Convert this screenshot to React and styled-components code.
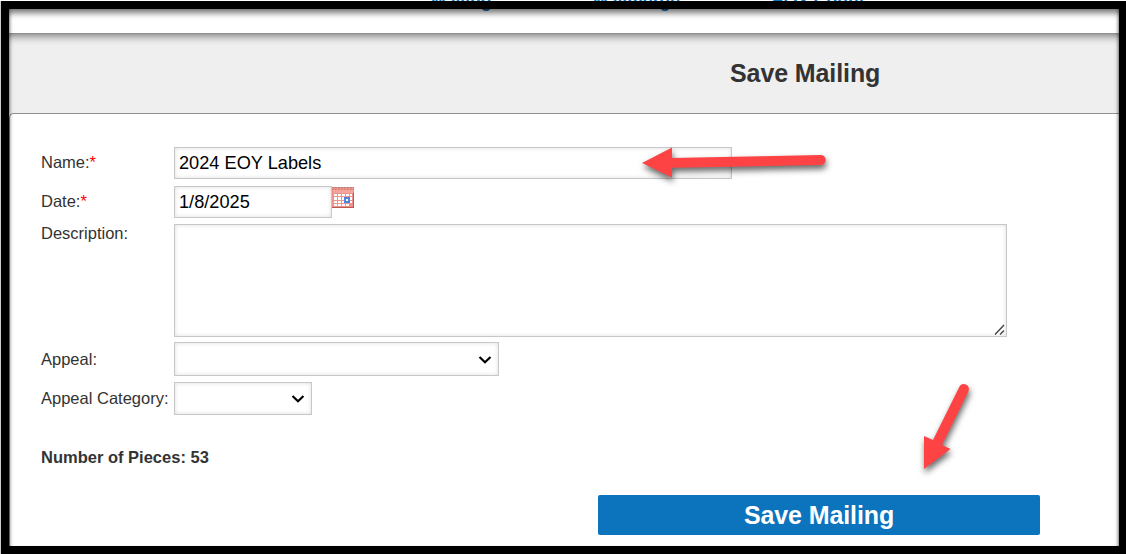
import { createGlobalStyle, styled } from "styled-components";

export default function App() {
    return (
        <Screen>
            <GlobalStyle />
            <Nav>
                <NavItem $width={162}>Mailing</NavItem>
                <NavItem $width={179}>Mailmerge</NavItem>
                <NavItem $width={120}>EOY Count</NavItem>
            </Nav>
            <Header>
                <Title>Save Mailing</Title>
            </Header>
            <Panel>
                <Row $height={32} $gap={7}>
                    <Label $lift={2}>Name:<Required>*</Required></Label>
                    <Input $width={558} defaultValue="2024 EOY Labels" />
                </Row>
                <Row $height={32} $gap={6}>
                    <Label $lift={2}>Date:<Required>*</Required></Label>
                    <Input $width={158} defaultValue="1/8/2025" />
                    <CalendarIcon />
                </Row>
                <Row $height={113} $gap={5} $top>
                    <Label>Description:</Label>
                    <TextArea>
                        <Grip viewBox="0 0 11 11">
                            <path d="M1 10.5 L10 1 M6 10.5 L10 6.5" />
                        </Grip>
                    </TextArea>
                </Row>
                <Row $height={34} $gap={6}>
                    <Label>Appeal:</Label>
                    <Select $width={325}><Chevron /></Select>
                </Row>
                <Row $height={33} $gap={32}>
                    <Label $lift={2}>Appeal Category:</Label>
                    <Select $width={138}><Chevron /></Select>
                </Row>
                <Pieces>Number of Pieces: 53</Pieces>
                <SaveButton>Save Mailing</SaveButton>
            </Panel>
            <Frame />
            <Arrows />
        </Screen>
    );
}

const CalendarIcon = () => (
    <Calendar viewBox="0 0 22 21" shapeRendering="crispEdges">
        <rect width="22" height="21" fill="#ec9088" />
        <path d="M0 .5H22" stroke="#a98480" strokeDasharray="2 1" />
        <path d="M0 2H22" stroke="#d4776e" strokeDasharray="1 2" />
        <rect x="1" y="3" width="20" height="3" fill="#f2a59c" />
        <rect x="1" y="6" width="19" height="13" fill="#f0958d" />
        <path
            d="M2 7h3v2h-3zM6 7h3v2h-3zM10 7h3v2h-3zM14 7h3v2h-3zM18 7h2v2h-2zM2 10h3v3h-3zM6 10h3v3h-3zM10 10h3v3h-3zM18 10h2v3h-2zM2 14h3v2h-3zM6 14h3v2h-3zM10 14h3v2h-3zM18 14h2v2h-2zM2 17h3v2h-3zM6 17h3v2h-3zM10 17h3v2h-3zM14 17h3v2h-3z"
            fill="#fff"
        />
        <rect x="12" y="10" width="6" height="6" fill="#4c86e4" />
        <rect x="14" y="12" width="2" height="2" fill="#fff" />
        <path d="M0 20.5H22M21.5 21V6" fill="none" stroke="#bd5851" />
    </Calendar>
);

const Chevron = () => (
    <ChevronIcon viewBox="0 0 14 10">
        <path d="M1.5 2 L7 7.2 L12.5 2" />
    </ChevronIcon>
);

const Arrows = () => (
    <Overlay viewBox="0 0 1126 554">
        <path d="M642 163 L672 147.5 V158 L820.5 155 A5 5 0 0 1 821 165 L672 167.8 V177.5 Z" />
        <path d="M924 469 V436 L933 440 L959.3 387 A5 5 0 0 1 968.5 391 L942 445 L950.5 449 Z" />
    </Overlay>
);

const GlobalStyle = createGlobalStyle`
    * {
        box-sizing: border-box;
    }
    body {
        margin: 0;
        font-family: "Liberation Sans", Arial, sans-serif;
        color: #333;
    }
`;

const Screen = styled.div`
    position: relative;
    width: 1126px;
    height: 554px;
    overflow: hidden;
    background: white;
`;

const Nav = styled.div`
    height: 33px;
    padding-left: 431px;
    display: flex;
`;

const NavItem = styled.span`
    width: ${(props) => props.$width}px;
    margin-top: -9px;
    font-size: 17.6px;
    font-weight: bold;
    line-height: 20px;
    color: #0b73bb;
    white-space: nowrap;
`;

const Header = styled.div`
    height: 80px;
    padding: 25px 0 0 730px;
    background: #efefef;
    box-shadow: inset 0 1px #909090, inset 0 9px 8px -6px #777;
`;

const Title = styled.h1`
    margin: 0;
    font-size: 25px;
    line-height: 30px;
    letter-spacing: -0.1px;
`;

const Panel = styled.div`
    height: 441px;
    margin-left: 9px;
    padding: 33px 0 0 31px;
    background: white;
    border: solid #909090;
    border-width: 1px 0 0 1px;
    border-top-left-radius: 5px;
    box-shadow: -5px -5px 0 #efefef;
`;

const Row = styled.div`
    display: flex;
    align-items: ${(props) => (props.$top ? "flex-start" : "center")};
    height: ${(props) => props.$height}px;
    margin-bottom: ${(props) => props.$gap}px;
`;

const Label = styled.label`
    width: 133px;
    flex: none;
    padding-bottom: ${(props) => props.$lift || 0}px;
    font-size: 16.5px;
    line-height: 18px;
    white-space: nowrap;
`;

const Required = styled.span`
    color: red;
`;

const Input = styled.input`
    width: ${(props) => props.$width}px;
    height: 32px;
    padding: 0 4px;
    border: 1px solid #c8c8c8;
    outline: none;
    box-shadow: inset 0 0 4px #ddd;
    font: 18.2px "Liberation Sans", Arial, sans-serif;
    color: black;
`;

const TextArea = styled.div`
    display: flex;
    align-items: flex-end;
    justify-content: flex-end;
    width: 833px;
    height: 113px;
    padding: 1px;
    border: 1px solid #c8c8c8;
    box-shadow: inset 0 0 4px #ddd;
`;

const Grip = styled.svg`
    width: 11px;
    height: 11px;
    stroke: #444;
    stroke-width: 1.4;
`;

const Select = styled.div`
    display: flex;
    align-items: center;
    justify-content: flex-end;
    width: ${(props) => props.$width}px;
    height: 100%;
    padding: 1px 6px 0 0;
    border: 1px solid #c8c8c8;
    box-shadow: inset 0 0 4px #ddd;
`;

const ChevronIcon = styled.svg`
    width: 14px;
    height: 10px;
    fill: none;
    stroke: black;
    stroke-width: 2.2;
`;

const Calendar = styled.svg`
    width: 22px;
    height: 21px;
    margin-bottom: 9px;
`;

const Pieces = styled.div`
    font-size: 16.5px;
    font-weight: bold;
    line-height: 20px;
`;

const SaveButton = styled.button`
    display: block;
    width: 442px;
    height: 40px;
    margin: 28px 0 0 557px;
    padding: 0;
    border: none;
    border-radius: 2px;
    background: #0c73bd;
    color: white;
    font: bold 25px "Liberation Sans", Arial, sans-serif;
    letter-spacing: -0.1px;
`;

/* black frame laid over the page, with its shadow falling inwards */
const Frame = styled.div`
    position: absolute;
    inset: 1px 0 0 1px;
    border: solid black;
    border-width: 8px 7px 8px 8px;
    box-shadow:
        inset 0 6px 6px -2px rgba(0, 0, 0, .55),
        inset 3px 0 3px -2px rgba(0, 0, 0, .35),
        inset -3px 0 3px -2px rgba(0, 0, 0, .4),
        -1px 0 0 #ccc;
    pointer-events: none;
`;

const Overlay = styled.svg`
    position: absolute;
    inset: 0;
    fill: #fd4343;
    filter: drop-shadow(1px 4px 3px rgba(0, 0, 0, .6));
    pointer-events: none;
`;
